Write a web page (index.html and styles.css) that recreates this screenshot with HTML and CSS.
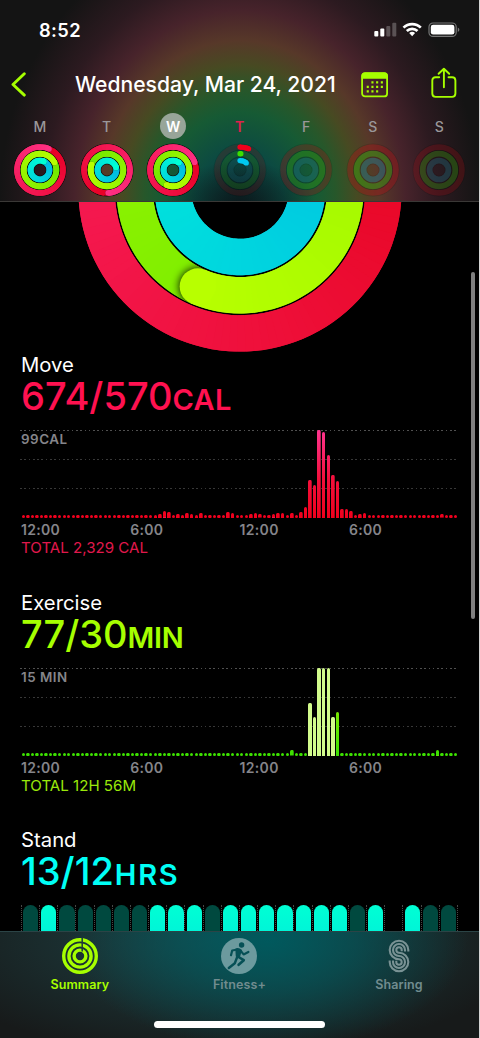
FILE: index.html
```html
<!DOCTYPE html>
<html lang="en">
<head>
    <meta charset="UTF-8">
    <meta name="viewport" content="width=device-width, initial-scale=1.0">
    <title>Activity Summary</title>
    <link rel="stylesheet" href="styles.css">
</head>
<body>
<div class="phone">

    <header class="header">
        <div class="status">
            <span class="time">8:52</span>
            <svg class="status-icons" width="88" height="18" viewBox="0 0 88 18">
                <!-- signal -->
                <g fill="#fff">
                    <rect x="1.3" y="10" width="4" height="5.4" rx="1"/>
                    <rect x="7.3" y="7.6" width="4" height="7.8" rx="1"/>
                    <rect x="13.3" y="4.9" width="4" height="10.5" rx="1" opacity=".25"/>
                    <rect x="19.3" y="1.8" width="4" height="13.6" rx="1" opacity=".25"/>
                </g>
                <!-- wifi -->
                <g fill="none" stroke="#fff" stroke-width="2.7">
                    <path d="M30.5 6.6a12.3 12.3 0 0 1 17.3 0"/>
                    <path d="M33.8 10a7.7 7.7 0 0 1 10.7 0"/>
                </g>
                <path d="M36.2 12.1a4.4 4.4 0 0 1 5.9 0L39.15 15.3z" fill="#fff"/>
                <!-- battery -->
                <rect x="56" y="2" width="27.2" height="13.4" rx="4" fill="none" stroke="#777" stroke-width="1.2"/>
                <rect x="57.8" y="3.8" width="23.6" height="9.8" rx="2.3" fill="#fff"/>
                <path d="M84.8 6.6v4.4q1.6-.8 1.6-2.2t-1.6-2.2z" fill="#777"/>
            </svg>
        </div>

        <div class="nav">
            <svg class="back" width="16" height="26" viewBox="0 0 16 26"><path d="M13.3 1.7 2 12.5l11.3 10.6" fill="none" stroke="#a6ff00" stroke-width="2.9" stroke-linecap="round" stroke-linejoin="round"/></svg>
            <h1>Wednesday, Mar 24, 2021</h1>
            <svg class="calendar" width="28" height="26" viewBox="0 0 28 26">
                <rect x="1.1" y="1.1" width="25" height="23.3" rx="3" fill="none" stroke="#a6ff00" stroke-width="1.8"/>
                <path d="M.5 6.8V4Q.5.4 4 .4h19.4q3.4 0 3.4 3.6v2.8z" fill="#a6ff00"/>
                <g stroke="#a6ff00" stroke-width="2.1" stroke-dasharray="2.1 2.6" fill="none">
                    <path d="M10.4 10.4h12"/><path d="M5.7 14.9h17"/><path d="M5.7 19.4h12"/>
                </g>
            </svg>
            <svg class="share" width="26" height="32" viewBox="0 0 26 32">
                <g fill="none" stroke="#a6ff00" stroke-width="1.9" stroke-linecap="round" stroke-linejoin="round">
                    <path d="M8.2 10.3H4.6q-3.3 0-3.3 3.3v13q0 3.3 3.3 3.3h16.5q3.3 0 3.3-3.3v-13q0-3.3-3.3-3.3h-3.6"/>
                    <path d="M12.9 20.3V2.2M7.6 6.8l5.3-5.1 5.3 5.1"/>
                </g>
            </svg>
        </div>

        <div class="week" id="week"></div>
    </header>

    <main class="content">
        <div class="rings">
            <svg id="bigRings" width="326" height="326" viewBox="-163 -163 326 326"></svg>
        </div>

        <section class="metric move">
            <h2>Move</h2>
            <p class="value">674/570<span>CAL</span></p>
            <div class="chart" id="moveChart"><span class="max">99CAL</span></div>
            <div class="axis"><span>12:00</span><span>6:00</span><span>12:00</span><span>6:00</span></div>
            <p class="total">TOTAL 2,329 CAL</p>
        </section>

        <section class="metric exercise">
            <h2>Exercise</h2>
            <p class="value">77/30<span>MIN</span></p>
            <div class="chart" id="exerciseChart"><span class="max">15 MIN</span></div>
            <div class="axis"><span>12:00</span><span>6:00</span><span>12:00</span><span>6:00</span></div>
            <p class="total">TOTAL 12H 56M</p>
        </section>

        <section class="metric stand">
            <h2>Stand</h2>
            <p class="value">13/12<span>HRS</span></p>
            <div class="hours" id="standChart"></div>
        </section>

        <div class="scrollbar"></div>
    </main>

    <nav class="tabbar">
        <a class="tab active">
            <svg width="38" height="38" viewBox="-19 -19 38 38">
                <g fill="none" stroke="#a6ff00" stroke-width="3.4">
                    <circle r="16.3"/><circle r="11.1"/><circle r="5.9"/>
                </g>
                <path d="M2.2-19v14.5" stroke="#1d393b" stroke-width="1.5"/>
            </svg>
            <span>Summary</span>
        </a>
        <a class="tab">
            <svg width="38" height="38" viewBox="-19 -19 38 38">
                <circle r="18" fill="#6c9a9e"/>
                <circle cx="2.6" cy="-11" r="2.7" fill="#065056"/>
                <path d="M-3.7-7.3Q-1.5-8.8.8-7.4L3-6 .6 2.2-3.2.6z" fill="#065056"/>
                <g fill="none" stroke="#065056" stroke-width="2.2" stroke-linecap="round" stroke-linejoin="round">
                    <path d="M-1.5-6.5-6.8-5.5-8-.8"/>
                    <path d="M1.8-5 4.6-1.6 9.4-4"/>
                    <path d="M-.5 1 4.8 4.2-.4 8.8" stroke-width="2.6"/>
                    <path d="M-1.8 1-4.2 7.2-10.2 12" stroke-width="2.4"/>
                </g>
            </svg>
            <span>Fitness+</span>
        </a>
        <a class="tab">
            <svg width="38" height="38" viewBox="-19 -19 38 38">
                <g fill="none" stroke="#799294" stroke-width="2.1">
                    <path d="M9.3-4.4V-6A9.3 9.3 0 1 0 0 3.3 2.7 2.7 0 1 1-2.7 6V4.8"/>
                    <path d="M6-4.4V-6A6 6 0 1 0 0 0 6 6 0 1 1-6 6V4.4"/>
                    <path d="M2.7-4.8V-6A2.7 2.7 0 1 0 0-3.3 9.3 9.3 0 1 1-9.3 6V4.4"/>
                </g>
            </svg>
            <span>Sharing</span>
        </a>
        <div class="home"></div>
    </nav>
</div>
<script src="script.js"></script>
</body>
</html>
```
FILE: styles.css
```css
* {
    box-sizing: border-box;
    margin: 0;
    padding: 0;
}

body {
    background: #d4d4d4;
    color: #fff;
    font-family: Inter, "Liberation Sans", sans-serif;
    overflow: hidden;
}

.phone {
    width: 479px;
    height: 1038px;
    background: #000;
    display: flex;
    flex-direction: column;
}

svg {
    display: block;
    flex: none;
}

/* Header */
.header {
    height: 202px;
    flex: none;
    border-bottom: 1px solid #3a3836;
    background:
        radial-gradient(75px 45px at 240px 206px, rgba(10, 18, 20, .8), rgba(10, 18, 20, 0)),
        radial-gradient(240px 275px at 240px 200px, #0d3035 0%, #0c4a42 18%, #165a34 32%, #27572a 40%, #474a22 49%, #573829 58%, #47232b 69%, #2c1a20 82%, #141414 100%);
}

.status {
    height: 57px;
    padding: 20px 18px 0 39px;
    display: flex;
    justify-content: space-between;
}

.time {
    font-size: 18.3px;
    line-height: 20px;
    font-weight: 600;
    letter-spacing: .4px;
}

.status-icons {
    margin-top: 1px;
}

.nav {
    height: 55px;
    padding-left: 11px;
    display: flex;
    align-items: center;
}

.nav h1 {
    width: 286px;
    padding-left: 48px;
    font-size: 21.1px;
    font-weight: 500;
    white-space: nowrap;
}

.calendar {
    margin-left: 48px;
}

.share {
    margin-left: 42px;
    margin-top: -3px;
}

.week {
    display: grid;
    grid-template-columns: repeat(7, 66.55px);
    padding-left: 6.7px;
    margin-top: 1px;
}

.day {
    display: flex;
    flex-direction: column;
    align-items: center;
    gap: 4px;
}

.day span {
    width: 26px;
    height: 26px;
    border-radius: 50%;
    line-height: 27px;
    text-align: center;
    font-size: 14px;
    font-weight: 500;
    color: #9a9799;
}

.day .selected {
    background: #98a599;
    color: #fff;
    font-weight: 600;
}

.day .today {
    color: #e0204c;
    font-weight: 600;
}

/* Scrolled content */
.content {
    position: relative;
    flex: 1;
    overflow: hidden;
}

.rings {
    height: 150px;
    display: flex;
    align-items: flex-end;
    justify-content: center;
}

#bigRings {
    margin-bottom: -1.3px;
}

.metric {
    height: 237.7px;
    padding-left: 21px;
}

.metric h2 {
    font-size: 20.3px;
    line-height: 26px;
    font-weight: 400;
}

.value {
    height: 36px;
    font-size: 38px;
    line-height: 36px;
    font-weight: 500;
    white-space: nowrap;
}

.value span {
    font-size: 29px;
    line-height: 0;
    font-weight: 600;
    letter-spacing: .3px;
}

.move .value { color: #ff1150; }
.exercise .value { color: #a6ff00; }
.exercise .value span { letter-spacing: -.3px; }
.stand .value { color: #00fff6; }
.stand .value span { letter-spacing: 1.7px; margin-left: 1px; }

.chart {
    width: 437px;
    height: 88px;
    margin-top: 16px;
    position: relative;
    display: grid;
    grid-template-columns: repeat(96, 1fr);
    align-items: end;
    justify-items: center;
}

/* dotted guide lines, one per third */
.chart::before {
    content: "";
    position: absolute;
    inset: 0 1px 0 -1px;
    background:
        repeating-linear-gradient(90deg, transparent 0 1.6px, #000 1.6px 4.3px),
        linear-gradient(#505050 1px, transparent 1px 29px, #383838 29px 30px, transparent 30px 58px, #383838 58px 59px, transparent 59px);
}

.max {
    position: absolute;
    top: 1px;
    left: 0;
    font-size: 13.4px;
    line-height: 17px;
    font-weight: 600;
    color: #85858a;
    letter-spacing: .5px;
}

.bar {
    position: relative;
    width: 3.4px;
    border-radius: 1.5px 1.5px 0 0;
    background: linear-gradient(0deg, #f0001c, #f3103c 45%, #ff3590) bottom / 100% 88px;
}

.exercise .bar {
    background: linear-gradient(0deg, #3ae000, #78e800 44px) bottom / 100% 88px;
}

.exercise .bar.bright {
    background: #d2fb8c;
}

.bar.low {
    border-radius: 1.5px;
}

.axis {
    display: grid;
    grid-template-columns: repeat(4, 109.3px);
    margin-top: 3px;
    font-size: 14px;
    line-height: 18px;
    font-weight: 600;
    letter-spacing: .3px;
    color: #85858a;
}

.total {
    font-size: 15.1px;
    line-height: 17px;
}

.move .total { color: #e0184c; }
.exercise .total { color: #9ae80a; }

.hours {
    width: 437px;
    height: 88px;
    margin-top: 15.6px;
    display: grid;
    grid-template-columns: repeat(24, 1fr);
    border-right: 1px dotted #484848;
}

.hour {
    border-left: 1px dotted #484848;
    padding: 0 .9px 0 1.1px;
}

.hour i {
    display: block;
    height: 100%;
    border-radius: 8px;
}

.hour .on { background: linear-gradient(#00ffd4, #00dde0); }
.hour .off { background: #00493f; }

.scrollbar {
    position: absolute;
    left: 471px;
    top: 70px;
    width: 4px;
    height: 347px;
    border-radius: 2px;
    background: #808080;
}

/* Tab bar */
.tabbar {
    position: relative;
    height: 107px;
    flex: none;
    display: grid;
    grid-template-columns: repeat(3, 159.6px);
    align-items: start;
    padding-top: 5px;
    border-top: 1px solid #2b4446;
    background:
        radial-gradient(200px 110px at 268px 8px, #00595d, rgba(0, 89, 93, .6) 45%, rgba(0, 89, 93, 0)),
        radial-gradient(310px 120px at 220px 6px, #1e4346, #171a1a);
}

.tab {
    display: flex;
    flex-direction: column;
    align-items: center;
    font-size: 12.5px;
    line-height: 18px;
    font-weight: 600;
    letter-spacing: .1px;
    color: #718c8f;
}

.tab span {
    margin-top: 1px;
}

.tab.active {
    color: #a6ff00;
}

.home {
    position: absolute;
    left: 154px;
    bottom: 10px;
    width: 171px;
    height: 7px;
    border-radius: 4px;
    background: #fff;
}
```
FILE: script.js
```js
const RED = [[232, 0, 36], [255, 48, 132]];
const GREEN = [[112, 232, 0], [184, 255, 0]];
const CYAN = [[0, 184, 228], [0, 255, 212]];

function point(r, deg) {
    const a = (deg - 90) * Math.PI / 180;
    return (r * Math.cos(a)).toFixed(2) + ' ' + (r * Math.sin(a)).toFixed(2);
}

function arc(r, w, from, to, color) {
    return `<path d="M${point(r, from)}A${r} ${r} 0 0 1 ${point(r, to)}" fill="none" stroke="${color}" stroke-width="${w}"/>`;
}

let clipId = 0;

// One activity ring: gradient segments, a soft shadow and a round tip.
// Angles above 360 mean the goal was passed and the ring overlaps itself.
function ring(r, w, end, colors) {
    const start = Math.max(0, end - 360);
    const step = r > 50 ? 3 : 10;
    const mix = t => 'rgb(' + colors[0].map((c, i) => Math.round(c + (colors[1][i] - c) * t)) + ')';
    const [x, y] = point(r, end).split(' ');
    const o = r + w / 2;
    const n = r - w / 2;
    let out = '';
    let tip = '';
    for (let a = start; a < end; a += step) {
        const to = Math.min(end, a + step * 2);
        const seg = arc(r, w, a, to, mix((a - start) / (end - start)));
        if (a > end - 40) tip += seg; else out += seg;
    }
    if (end > 360) {
        const id = 'ring' + clipId++;
        out += `<clipPath id="${id}"><path clip-rule="evenodd" d="M0-${o}a${o} ${o} 0 1 0 .01 0zM0-${n}a${n} ${n} 0 1 0 .01 0z"/></clipPath>`;
        out += `<g clip-path="url(#${id})"><circle cx="${x}" cy="${y}" r="${w / 2}" opacity="${r > 50 ? 1 : .6}" style="filter:blur(${w / 9}px)"/></g>`;
    } else {
        const [sx, sy] = point(r, 0).split(' ');
        out += `<circle cx="${sx}" cy="${sy}" r="${w / 2}" fill="${mix(0)}"/>`;
    }
    return out + tip + `<circle cx="${x}" cy="${y}" r="${w / 2}" fill="${mix(1)}"/>`;
}

document.getElementById('bigRings').innerHTML =
    ring(143.4, 36.4, 430, [[232, 6, 36], [255, 40, 116]]) +
    ring(105.3, 36.4, 563.6, [[128, 238, 0], [184, 255, 0]]) +
    ring(67, 36.4, 395, [[0, 196, 226], [0, 240, 218]]);

// Week strip
const week = [
    { d: 'M', a: [383, 423, 385] },
    { d: 'T', a: [537, 650, 435] },
    { d: 'W', a: [430, 563, 400], cls: 'selected' },
    { d: 'T', a: [22, 3, 42], cls: 'today', dim: .45 },
    { d: 'F', dim: .75 },
    { d: 'S', dim: 1 },
    { d: 'S', dim: .7 }
];
const radii = [22.9, 16.3, 9.4];
const flat = [[240, 0, 28], [60, 224, 0], [0, 200, 240]];

week.forEach(day => {
    let svg = '';
    [RED, GREEN, CYAN].forEach((c, i) => {
        if (!day.a || day.dim) {
            // fainter track for days without data
            const track = ['#e8141e', '#46d210', '#289bb4'][i];
            svg += `<circle r="${radii[i]}" fill="none" stroke="#000" stroke-opacity=".12" stroke-width="7.2"/>`;
            svg += `<circle r="${radii[i]}" fill="none" stroke="${track}" stroke-opacity="${(i ? .36 : .28) * day.dim}" stroke-width="5.8"/>`;
        } else {
            svg += `<circle r="${radii[i]}" fill="none" stroke="#0a0d0c" stroke-width="7.2"/>`;
        }
        if (day.a) svg += ring(radii[i], day.dim ? 5.2 : 5.9, day.a[i], day.dim ? [flat[i], flat[i]] : c);
    });
    document.getElementById('week').innerHTML +=
        `<div class="day"><span class="${day.cls || ''}">${day.d}</span>
        <svg width="54" height="54" viewBox="-27 -27 54 54">${svg}</svg></div>`;
});

// Quarter-hour bars, everything not listed stays at the baseline
function bars(id, heights, bright) {
    const chart = document.getElementById(id);
    for (let i = 0; i < 96; i++) {
        const h = heights[i] || 3;
        const bar = document.createElement('div');
        bar.className = 'bar' + (h <= 3 ? ' low' : '') + (bright.includes(i) ? ' bright' : '');
        bar.style.height = h + 'px';
        chart.appendChild(bar);
    }
}

bars('moveChart', {
    29: 3.5, 30: 4, 31: 6.6, 32: 6, 34: 4, 35: 3.5, 36: 5, 37: 4, 38: 3.5, 39: 5, 45: 6, 46: 5.5,
    50: 4, 51: 5, 52: 3.6, 55: 3.6, 56: 5, 57: 5, 59: 5.5, 61: 6, 62: 11.3, 63: 38, 64: 33.5,
    65: 88, 66: 86, 67: 63, 68: 43, 69: 37.5, 70: 9.5, 71: 9.5, 72: 7, 74: 4, 75: 5, 92: 3.6
}, []);

bars('exerciseChart', {
    59: 5.5, 63: 53, 64: 39, 65: 88, 66: 88, 67: 88, 68: 39, 69: 44, 91: 5.5
}, [63, 64, 65, 66, 67, 68]);

// Stand hours: 1 stood, 0 idle, - no data
'01000001110111111101-100'.split('').forEach(h => {
    const fill = h === '-' ? '' : `<i class="${h === '1' ? 'on' : 'off'}"></i>`;
    document.getElementById('standChart').innerHTML += `<div class="hour">${fill}</div>`;
});
```
